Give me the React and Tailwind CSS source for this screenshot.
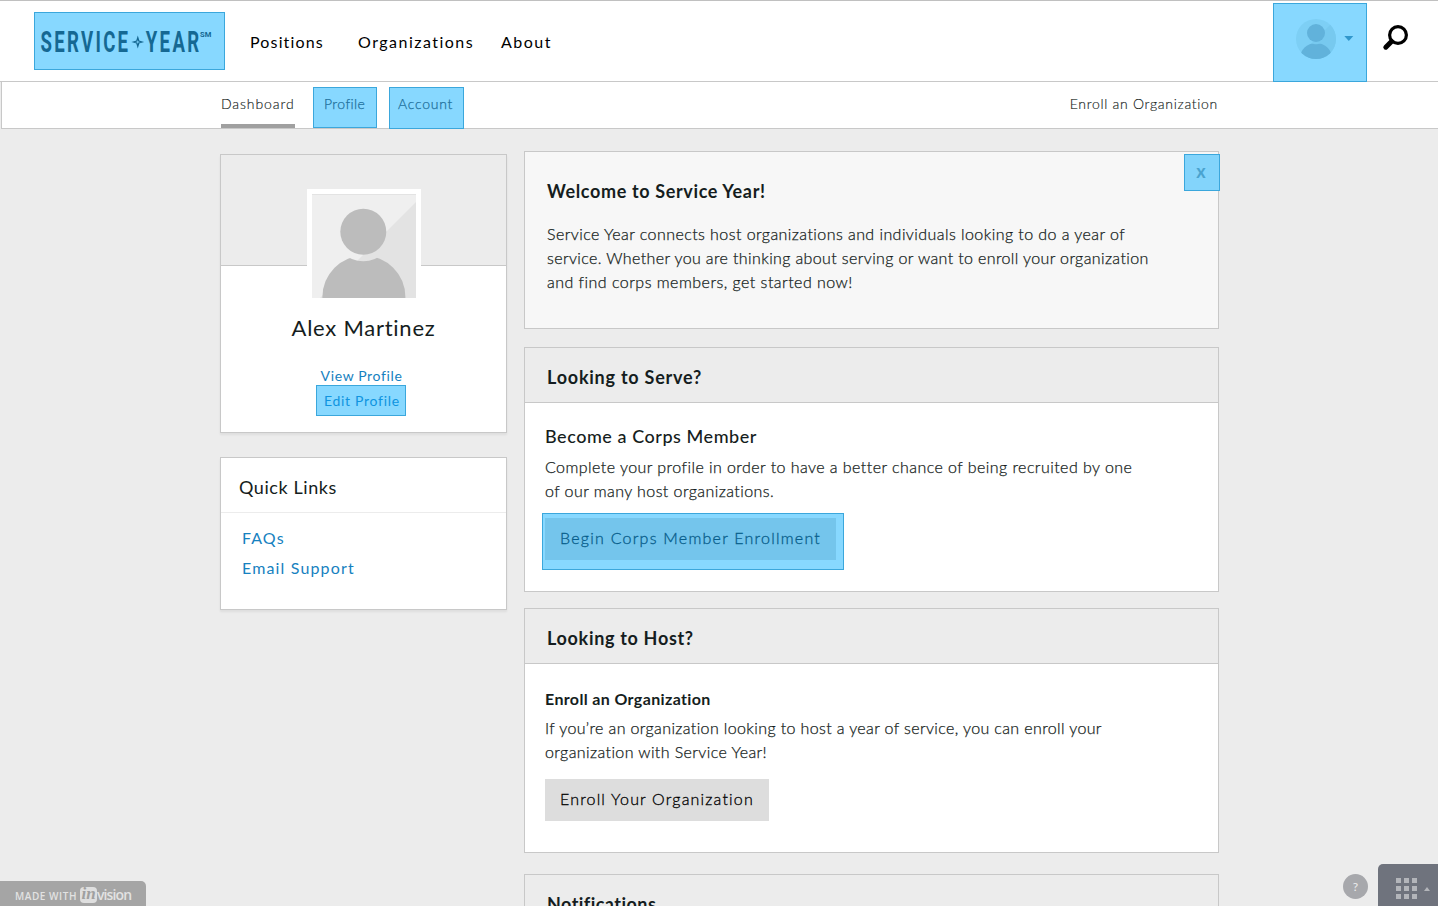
import React from "react";

function Line({ className, children }) {
  return <span className={"inline-block whitespace-nowrap " + className}>{children}</span>;
}

function Logo() {
  return (
    <svg width="189" height="56" viewBox="35 13 189 56" fill="#156893" fontFamily="Roboto, sans-serif" fontWeight="700">
      <text transform="translate(40.5 52) scale(.63 1)" fontSize="29.5" textLength="139">SERVICE</text>
      <path d="M137.8 37.8l1 3.2 3.2 1-3.2 1-1 3.2-1-3.2-3.2-1 3.2-1z" fill="none" stroke="#156893" strokeWidth="1.3" />
      <text transform="translate(145.7 52) scale(.63 1)" fontSize="29.5" textLength="85">YEAR</text>
      <text x="200" y="37" fontSize="8" textLength="11.3" lengthAdjust="spacingAndGlyphs">SM</text>
    </svg>
  );
}

function Avatar() {
  return (
    <svg width="104" height="104" viewBox="312 194 104 104">
      <rect x="312" y="194" width="104" height="104" fill="#efefef" />
      <path d="M416 202V298H320Z" fill="#e3e3e3" />
      <rect x="312" y="194" width="104" height="1" fill="#e3e3e3" />
      <mask id="neck">
        <rect x="312" y="194" width="104" height="104" fill="#fff" />
        <circle cx="363.3" cy="231.7" r="29.6" fill="#000" />
      </mask>
      <circle cx="363.3" cy="231.7" r="23" fill="#bcbcbc" />
      <circle cx="363.9" cy="297" r="41.5" fill="#bcbcbc" mask="url(#neck)" />
    </svg>
  );
}

function UserMenu() {
  return (
    <svg width="92" height="77" viewBox="1274 4 92 77">
      <clipPath id="disc"><circle cx="1316" cy="39" r="20" /></clipPath>
      <mask id="smallneck">
        <rect x="1290" y="10" width="60" height="60" fill="#fff" />
        <circle cx="1316" cy="33" r="11.2" fill="#000" />
      </mask>
      <g clipPath="url(#disc)">
        <rect x="1296" y="19" width="40" height="40" fill="#7dcff5" />
        <path d="M1336 19V59H1296Z" fill="#77c9ef" />
        <circle cx="1316" cy="33" r="9" fill="#61b2db" />
        <circle cx="1316" cy="59.5" r="16.5" fill="#61b2db" mask="url(#smallneck)" />
      </g>
      <path d="M1344.3 36H1353.3L1348.8 41Z" fill="#3197cc" />
    </svg>
  );
}

function Panel({ title, tracking, children }) {
  return (
    <section className="h-[245px] border border-[#c8c8c8] bg-white">
      <h2 className="flex h-[55px] items-center border-b border-[#c8c8c8] bg-[#ececec] pl-[22px] pt-[3px] text-lg font-bold">
        <Line className={tracking}>{title}</Line>
      </h2>
      {children}
    </section>
  );
}

const body = "text-base font-light leading-6 [-webkit-text-stroke:0.25px_#151d20]";

export default function App() {
  return (
    <div className="relative flex h-[906px] w-[1438px] flex-col overflow-hidden bg-[#ececec] font-[Lato,sans-serif] text-[#151d20]">
      <header className="flex h-[82px] shrink-0 items-start border-y border-t-[#c0c0c0] border-b-[#c8c8c8] bg-white">
        <div className="ml-[34px] mt-[11px] h-[58px] w-[191px] border border-[#3ba7dc] bg-[#87d8ff]"><Logo /></div>
        <nav className="mt-[29px] flex text-base leading-6 text-black">
          <a className="ml-[25px] w-[108px]"><Line className="tracking-[1.15px]">Positions</Line></a>
          <a className="w-[143px]"><Line className="tracking-[1.48px]">Organizations</Line></a>
          <a><Line className="tracking-[1.5px]">About</Line></a>
        </nav>
        <div className="ml-auto mr-[15px] mt-0.5 h-[79px] w-[94px] border border-[#3ba7dc] bg-[#87d8ff]"><UserMenu /></div>
        <svg className="mr-7 mt-[22px]" width="28" height="28" viewBox="1382 23 28 28" fill="none" stroke="#000">
          <circle cx="1398" cy="35" r="8.4" strokeWidth="3.2" />
          <path d="M1391.5 41.5L1385.8 47.2" strokeWidth="5" strokeLinecap="round" />
        </svg>
      </header>
      <div className="ml-px flex h-[47px] shrink-0 border-b border-l border-[#c8c8c8] bg-white text-sm font-light">
        <div className="ml-[219px] h-[46px] w-[74px] border-b-4 border-[#a0a0a0] pt-3 leading-5 [-webkit-text-stroke:0.15px_#151d20]"><Line className="tracking-[0.9px]">Dashboard</Line></div>
        <div className="ml-[18px] mt-[5px] h-[41px] w-16 border border-[#3ba7dc] bg-[#87d8ff] pl-[10px] pt-[6px] leading-5 text-[#1d6f9b] [-webkit-text-stroke:0.25px_#1d6f9b]"><Line className="tracking-[0.4px]">Profile</Line></div>
        <div className="ml-3 mt-[5px] h-[42px] w-[75px] border border-[#3ba7dc] bg-[#87d8ff] pl-2 pt-[6px] leading-5 text-[#1d6f9b] [-webkit-text-stroke:0.25px_#1d6f9b]"><Line className="tracking-[0.75px]">Account</Line></div>
        <div className="ml-auto mr-[220px] pt-3 leading-5 [-webkit-text-stroke:0.15px_#151d20]"><Line className="tracking-[0.7px]">Enroll an Organization</Line></div>
      </div>
      <main className="flex gap-[17px] pl-[220px]">
        <aside className="mt-[25px] flex w-[287px] flex-col gap-6">
          <section className="flex h-[279px] flex-col items-center border border-[#c8c8c8] bg-white shadow-[0_2px_2px_#00000010]">
            <div className="flex h-[111px] w-full justify-center border-b border-[#c8c8c8] bg-[#ececec]">
              <div className="mt-[34px] h-[114px] w-[114px] bg-white p-[5px]"><Avatar /></div>
            </div>
            <h1 className="mt-[46px] text-[22px] leading-8"><Line className="tracking-[0.75px]">Alex Martinez</Line></h1>
            <a className="-ml-1 mt-[22px] text-sm leading-5 text-[#1681c0]"><Line className="tracking-[0.63px]">View Profile</Line></a>
            <a className="-ml-[5px] mt-[-1px] h-[31px] w-[90px] border border-[#3ba7dc] bg-[#87d8ff] pl-[7px] pt-[5px] text-sm leading-5 text-[#0f94e0]"><Line className="tracking-[0.7px]">Edit Profile</Line></a>
          </section>
          <section className="h-[153px] border border-[#c8c8c8] bg-white shadow-[0_2px_2px_#00000010]">
            <h2 className="flex h-[55px] items-center border-b border-[#ececec] pl-[18px] pt-[3px] text-lg"><Line className="tracking-[0.58px]">Quick Links</Line></h2>
            <div className="flex flex-col pl-[21px] pt-[10px] text-base leading-[30px] text-[#1681c0]">
              <a><Line className="tracking-[1.1px]">FAQs</Line></a>
              <a><Line className="tracking-[1.15px]">Email Support</Line></a>
            </div>
          </section>
        </aside>
        <div className="mt-[22px] w-[695px]">
          <section className="flex h-[178px] border border-[#c8c8c8] bg-[#f7f7f7] pl-[22px]">
            <div className="pt-[27px]">
              <h2 className="text-lg font-bold leading-6"><Line className="tracking-[0.64px]">Welcome to Service Year!</Line></h2>
              <p className={"mt-[19px] " + body}>
                <Line className="tracking-[0.435px]">Service Year connects host organizations and individuals looking to do a year of</Line><br />
                <Line className="tracking-[0.375px]">service. Whether you are thinking about serving or want to enroll your organization</Line><br />
                <Line className="tracking-[0.475px]">and find corps members, get started now!</Line>
              </p>
            </div>
            <div className="-mr-0.5 ml-auto mt-0.5 flex h-[37px] w-9 justify-center border border-[#3ba7dc] bg-[#83d4fb] pr-0.5 pt-1 text-lg font-bold leading-6 text-[#4aa3cf]">x</div>
          </section>
          <div className="mt-[18px]">
            <Panel title="Looking to Serve?" tracking="tracking-[0.77px]">
              <div className="pl-5 pt-[21px]">
                <h3 className="text-lg font-medium leading-6"><Line className="tracking-[0.54px]">Become a Corps Member</Line></h3>
                <p className={"mt-[7px] " + body}>
                  <Line className="tracking-[0.445px]">Complete your profile in order to have a better chance of being recruited by one</Line><br />
                  <Line className="tracking-[0.428px]">of our many host organizations.</Line>
                </p>
                <div className="-ml-[3px] mt-[10px] h-[57px] w-[302px] border border-[#3ba7dc] bg-[#87d8ff] pl-0.5 pt-1">
                  <div className="h-[42px] w-[291px] bg-[#74c5ec] pl-[15px] pt-2 font-light leading-6 text-[#075d8b] [-webkit-text-stroke:0.3px_#075d8b]"><Line className="tracking-[1.24px]">Begin Corps Member Enrollment</Line></div>
                </div>
              </div>
            </Panel>
          </div>
          <div className="mt-4">
            <Panel title="Looking to Host?" tracking="tracking-[0.68px]">
              <div className="pl-5 pt-[23px]">
                <h3 className="text-base font-bold leading-6"><Line className="tracking-[0.36px]">Enroll an Organization</Line></h3>
                <p className={"mt-[5px] " + body}>
                  <Line className="tracking-[0.373px]">If you’re an organization looking to host a year of service, you can enroll your</Line><br />
                  <Line className="tracking-[0.4px]">organization with Service Year!</Line>
                </p>
                <div className="mt-[15px] h-[42px] w-[224px] bg-[#ddd] pl-[15px] pt-2 font-light leading-6 text-black [-webkit-text-stroke:0.3px_#000]"><Line className="tracking-[1.18px]">Enroll Your Organization</Line></div>
              </div>
            </Panel>
          </div>
          <div className="mt-[21px]"><Panel title="Notifications" tracking="tracking-[0.45px]" /></div>
        </div>
      </main>
      <div className="absolute bottom-0 left-0 flex h-[25px] w-[146px] items-start rounded-tr-[5px] bg-[#a5a5a5] pl-[15px] pt-1.5 text-[#e2e2e2]">
        <span className="w-[65px] whitespace-nowrap pt-[3px] font-['Open_Sans',sans-serif] text-[10px] font-semibold leading-3 tracking-[0.55px]">MADE WITH</span>
        <span className="h-4 w-[17px] rounded-sm bg-[#dfdfdf] text-center font-['Liberation_Serif',serif] text-[17px] font-bold italic leading-[14px] text-[#a0a0a0]">in</span>
        <span className="pt-0.5 font-['Open_Sans',sans-serif] text-[14px] font-semibold leading-3 tracking-[-0.9px]">vision</span>
      </div>
      <div className="absolute bottom-0 right-0 flex h-[42px] items-center gap-[10px]">
        <span className="mt-[3px] flex h-[25px] w-[25px] items-center justify-center rounded-full bg-[#a7a8ac] text-xs text-[#ececec]">?</span>
        <div className="h-[42px] w-[60px] rounded-tl-[5px] bg-[#6f737d]">
          <svg width="60" height="42" fill="#b3b5ba">
            {[14, 22, 30].map((y) => [18, 26, 34].map((x) => <rect key={x + "-" + y} x={x} y={y} width="5" height="5" />))}
            <path d="M46 27L49 23L52 27Z" />
          </svg>
        </div>
      </div>
    </div>
  );
}
